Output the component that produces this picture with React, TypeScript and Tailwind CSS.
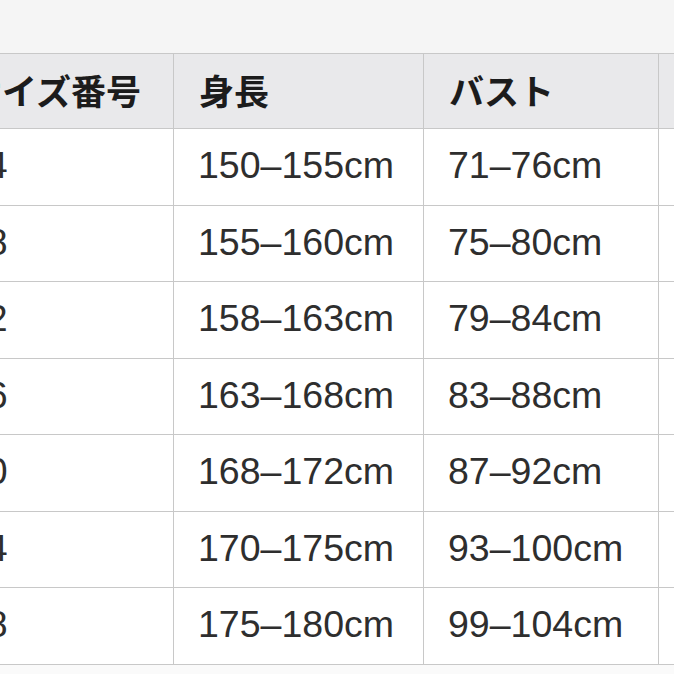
const rows = [
  ["34", "150–155cm", "71–76cm"],
  ["38", "155–160cm", "75–80cm"],
  ["42", "158–163cm", "79–84cm"],
  ["46", "163–168cm", "83–88cm"],
  ["50", "168–172cm", "87–92cm"],
  ["54", "170–175cm", "93–100cm"],
  ["58", "175–180cm", "99–104cm"],
];

const cols = "grid grid-cols-[232px_250px_235px_260px]";

export default function App() {
  return (
    <div className="h-[674px] w-[674px] overflow-hidden bg-[#fafafa] font-['Liberation_Sans','Noto_Sans_CJK_JP',sans-serif]">
      <div className="h-[53px] bg-[#f5f5f5]" />

      <div className="ml-[-58px] w-[977px] border-t border-[#c8c8c8]">
        <div className={`${cols} h-[75px] bg-[#e9e9eb]`}>
          {["サイズ番号", "身長", "バスト", "ウエスト"].map((h) => (
            <div
              key={h}
              className="flex items-center border-r border-b border-[#c8c8c8] pl-[25px] pb-[3px] font-['Noto_Sans_CJK_JP',sans-serif] text-[35px] font-bold leading-none text-[#1c1c1c]"
            >
              {h}
            </div>
          ))}
        </div>

        {rows.map((r) => (
          <div key={r[0]} className={`${cols} h-[76.5px] bg-white`}>
            {[...r, ""].map((c, i) => (
              <div
                key={i}
                className="flex items-center border-r border-b border-[#c8c8c8] pl-[24px] pb-[2px] text-[37.5px] leading-none text-[#2e2e2e]"
              >
                {c}
              </div>
            ))}
          </div>
        ))}
      </div>
    </div>
  );
}
